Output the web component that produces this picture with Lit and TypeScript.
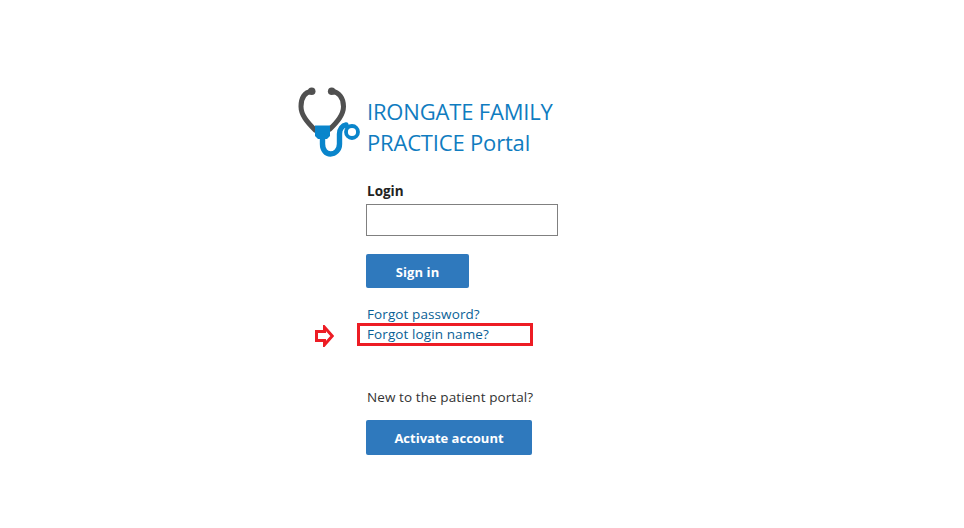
import { LitElement, html, css } from "lit";
import { customElement } from "lit/decorators.js";

@customElement("app-root")
export class AppRoot extends LitElement {
  static styles = css`
    :host {
      display: block;
      width: 964px;
      height: 528px;
      background: #fff;
      font-family: "Open Sans", "Noto Sans", sans-serif;
      color: #333;
    }
    .page {
      position: relative;
      box-sizing: border-box;
      height: 100%;
      padding: 84px 0 0 296px;
    }
    .brand {
      display: flex;
      align-items: flex-start;
      height: 78px;
    }
    .logo {
      width: 68px;
      height: 76px;
      flex: none;
    }
    .title {
      margin: 12px 0 0 3px;
      width: 200px;
      font-size: 22px;
      line-height: 31px;
      font-weight: 400;
      letter-spacing: -0.18px;
      color: #0f7cc0;
    }
    .form {
      display: flex;
      flex-direction: column;
      align-items: flex-start;
      padding: 20px 0 0 70px;
    }
    .label {
      font-size: 13.5px;
      line-height: 18px;
      font-weight: 700;
      color: #222;
      margin-left: 1px;
    }
    .input {
      box-sizing: border-box;
      width: 192px;
      height: 32px;
      margin-top: 4px;
      border: 1px solid #808080;
      background: #fff;
      padding: 0 6px;
    }
    .btn {
      box-sizing: border-box;
      border: 0;
      border-radius: 2px;
      background: #2f79bd;
      color: #fff;
      font: 700 13px "Open Sans", "Noto Sans", sans-serif;
    }
    .signin {
      width: 103px;
      height: 34px;
      margin-top: 18px;
      padding: 2px 0 0;
      letter-spacing: 0.1px;
    }
    .links {
      display: flex;
      flex-direction: column;
      margin: 16px 0 0 1px;
      font-size: 13.5px;
      line-height: 20px;
      letter-spacing: 0.1px;
    }
    .links a {
      color: #0a5f96;
      text-decoration: none;
    }
    .new {
      margin: 43px 0 0 1px;
      font-size: 13.5px;
      line-height: 20px;
      letter-spacing: 0.09px;
      color: #333;
    }
    .activate {
      width: 166px;
      height: 35px;
      margin-top: 13px;
    }
    .callout {
      position: absolute;
      left: 357px;
      top: 323px;
      width: 176px;
      height: 23px;
      box-sizing: border-box;
      border: 3px solid #ed1c24;
    }
    .arrow {
      position: absolute;
      left: 315px;
      top: 325px;
      width: 19px;
      height: 22px;
    }
  `;

  render() {
    return html`
      <div class="page">
        <div class="brand">
          <svg class="logo" viewBox="0 0 68 76" fill="none">
            <path
              d="M15.7 7.2C8.5 8 5 14 5 22.5C5 31 11 38 19 46M35.7 7.2C43 8 47.5 14 47.5 22.5C47.5 31 41 38 34 45"
              stroke="#505050"
              stroke-width="5"
              stroke-linecap="round"
            />
            <circle cx="15.7" cy="7.2" r="3.8" fill="#505050" />
            <circle cx="35.7" cy="7.2" r="3.8" fill="#505050" />
            <path d="M19 41.5L34 41.5V52L31 55H22L19 52Z" fill="#0a85cb" />
            <path
              d="M26.5 52V60C26.5 66 30 70 34.5 70C39 70 43.5 66 43.5 60V50C43.5 45 46.5 41.5 50 41"
              stroke="#0a85cb"
              stroke-width="5.4"
              stroke-linecap="round"
            />
            <circle cx="56" cy="48" r="6" stroke="#0a85cb" stroke-width="3.8" />
          </svg>
          <h1 class="title">IRONGATE FAMILY PRACTICE Portal</h1>
        </div>
        <div class="form">
          <label class="label" for="login">Login</label>
          <input class="input" id="login" type="text" />
          <button class="btn signin">Sign in</button>
          <div class="links">
            <a href="#">Forgot password?</a>
            <a href="#">Forgot login name?</a>
          </div>
          <div class="new">New to the patient portal?</div>
          <button class="btn activate">Activate account</button>
        </div>
        <div class="callout"></div>
        <svg class="arrow" viewBox="0 0 19 22" fill="#fff">
          <path d="M1.5 6.5H9.5V2.2L17.3 11L9.5 19.8V15.5H1.5Z" stroke="#ed1c24" stroke-width="3" />
        </svg>
      </div>
    `;
  }
}
